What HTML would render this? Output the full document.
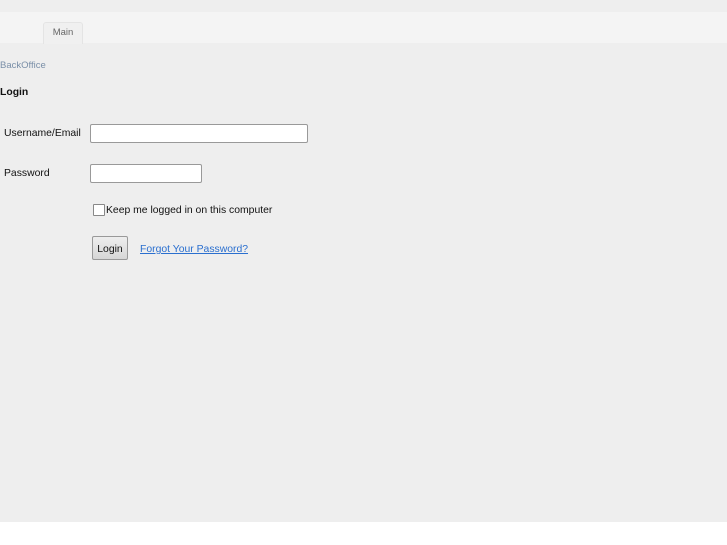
<!DOCTYPE html>
<html><head><style>
body{margin:0;width:727px;height:545px;background:#fff;font-family:"Liberation Sans",sans-serif;position:relative;overflow:hidden}
.bg{position:absolute;left:0;top:0;width:727px;height:522px;background:#eeeeee}
.bar{position:absolute;left:0;top:12px;width:727px;height:31px;background:#f4f4f4}
.tab{position:absolute;left:43px;top:22px;width:38px;height:21px;background:#f0f0f0;border:1px solid #e4e4e4;border-bottom:none;border-radius:3px 3px 0 0;font-size:9.5px;color:#666;text-align:center;line-height:20px}
.t{position:absolute;font-size:10.4px;color:#111}
input.txt{position:absolute;border:1px solid #999;border-radius:2px;background:#fff;padding:0;box-sizing:border-box}
.btn{position:absolute;left:92px;top:236px;width:36px;height:24px;box-sizing:border-box;border:1px solid #999;border-radius:2px;background:linear-gradient(#eee,#d6d6d6);font-size:10.4px;text-align:center;line-height:25px;color:#111}
.cb{position:absolute;left:93px;top:204px;width:10px;height:10px;border:1px solid #888;background:#fff;border-radius:1px}
</style></head><body>
<div class="bg"></div><div class="bar"></div>
<div class="tab">Main</div>
<div class="t" style="left:0;top:60px;font-size:9.5px;color:#7a8fa8">BackOffice</div>
<div class="t" style="left:0;top:87px;font-weight:bold">Login</div>
<div class="t" style="left:4px;top:128px">Username/Email</div>
<input class="txt" style="left:90px;top:124px;width:218px;height:19px">
<div class="t" style="left:4px;top:168px">Password</div>
<input class="txt" style="left:90px;top:164px;width:112px;height:19px">
<div class="cb"></div>
<div class="t" style="left:106px;top:205px">Keep me logged in on this computer</div>
<div class="btn">Login</div>
<div class="t" style="left:140px;top:244px;color:#2a6fcf;text-decoration:underline">Forgot Your Password?</div>
</body></html>
